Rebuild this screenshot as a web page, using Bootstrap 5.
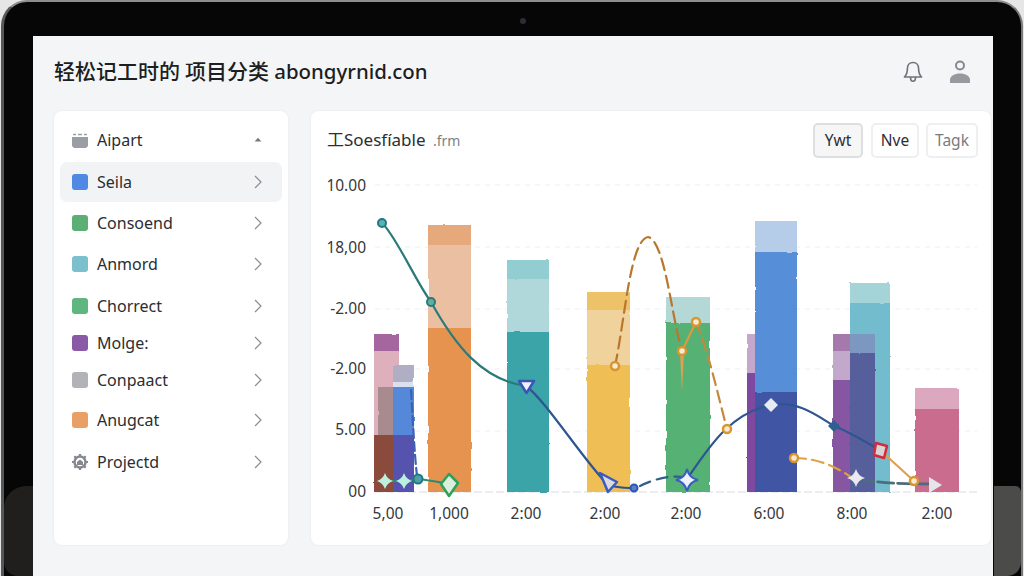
<!DOCTYPE html>
<html lang="zh">
<head>
    <meta charset="utf-8">
    <title>轻松记工时的项目分类</title>
    <link href="https://cdn.jsdelivr.net/npm/bootstrap@5.3.0/dist/css/bootstrap.min.css" rel="stylesheet">
    <style>
        html, body { height: 100%; }
        body {
            background: #e6e6e7;
            overflow: hidden;
            font-family: "Noto Sans", "Noto Sans CJK SC", sans-serif;
        }
        .device {
            position: relative;
            width: 1022px;
            height: 576px;
            margin-left: 1px;
            padding: 36px 28px 0 29px;
            background: #060606;
            border-top: 2px solid #8d8d8d;
            border-left: 3px solid #55585b;
            border-right: 2px solid #77797b;
            border-radius: 26px 26px 0 0;
            box-sizing: border-box;
        }
        .device-camera {
            position: absolute;
            left: 516px;
            top: 16px;
            width: 6px;
            height: 6px;
            border-radius: 50%;
            background: #2b2e36;
        }
        .device-foot {
            position: absolute;
            bottom: 0;
            height: 90px;
        }
        .device-foot-left { left: 0; width: 29px; border-radius: 22px 0 0 14px; background: #211f1d; }
        .device-foot-right { right: 0; width: 27px; border-radius: 0 6px 14px 0; background: #4b4b4a; }
        .screen {
            position: relative;
            z-index: 1;
            width: 960px;
            height: 540px;
            margin-top: -2px;
            background: #f4f5f6;
        }
        .top-bar { height: 75px; padding: 0 22px 4px 21px; }
        .app-title {
            font-size: 20.4px;
            font-weight: 500;
            color: #1c1e21;
            margin: 0;
        }
        .app-title b { font-size: 21px; font-weight: 500; }
        .app-title b + b { margin-left: 5px; }
        .top-icons { gap: 25px; }
        .work-area { padding-left: 21px; gap: 23px; }
        .side-panel, .chart-panel {
            height: 434px;
            background: #fff;
            border-radius: 8px;
            box-shadow: 0 0 3px rgba(0, 0, 0, .06);
        }
        .side-panel { width: 234px; padding: 6px 6px; }
        .chart-panel { width: 680px; }
        .side-row {
            padding: 0 20px 0 12px;
            font-size: 16px;
            color: #2a2d31;
            border-radius: 7px;
        }
        .side-row.active-row { background: #f2f3f4; }
        .side-swatch {
            width: 16px;
            height: 16px;
            border-radius: 3px;
            margin-right: 9px;
            flex: none;
        }
        .side-label { flex: 1; }
        .chart-head { height: 54px; padding: 12px 13px 0 16px; }
        .chart-title { font-size: 17px; line-height: 33px; color: #2b2e32; }
        .chart-title span { font-size: 14px; color: #7d8186; margin-left: 3px; }
        .range-btn {
            height: 35px;
            padding: 0;
            font-size: 15.5px;
            line-height: 31px;
            color: #2c2f33;
            background: #fff;
            border: 2px solid #eeeff0;
            border-radius: 5px;
        }
        .range-btn.on { width: 50px; background: #f6f6f7; border-color: #dcdee0; }
        .range-btn.mid { width: 48px; margin-left: 8px; }
        .range-btn.off { width: 52px; margin-left: 7px; color: #777b80; }
        .chart-box { display: block; }
        .axis-text { font-size: 15.5px; fill: #35383c; font-family: "Noto Sans", sans-serif; }
    </style>
</head>
<body>
    <div class="device">
        <div class="device-camera"></div>
        <div class="device-foot device-foot-left"></div>
        <div class="device-foot device-foot-right"></div>

        <div class="screen">
            <header class="top-bar d-flex align-items-center justify-content-between">
                <h1 class="app-title"><b>轻松记工时的</b><b>项目分类</b> abongyrnid.con</h1>
                <div class="top-icons d-flex align-items-center">
                    <svg width="22" height="24" viewBox="0 0 22 24" fill="none" stroke="#6f7378" stroke-width="1.6" stroke-linecap="round" stroke-linejoin="round">
                        <path d="M11 2.5c-3.7 0-5.6 2.9-5.6 6.2 0 4.700-1.400 6.700-3 8.300h17.200c-1.600-1.600-3-3.600-3-8.300 0-3.300-1.900-6.200-5.600-6.200z"/>
                        <path d="M8.500 17.500c0 2.400 1.100 3.700 2.500 3.700s2.500-1.300 2.500-3.700"/>
                    </svg>
                    <svg width="22" height="24" viewBox="0 0 22 24">
                        <circle cx="11" cy="5.500" r="4" fill="none" stroke="#85898e" stroke-width="2"/>
                        <path d="M1 23v-3c0-4 4.500-6.500 10-6.500s10 2.500 10 6.500v3z" fill="#969a9f"/>
                    </svg>
                </div>
            </header>

            <div class="work-area d-flex">
                <aside class="side-panel" id="sideList"></aside>

                <section class="chart-panel">
                    <div class="chart-head d-flex justify-content-between">
                        <div class="chart-title">工Soesfíable <span>.frm</span></div>
                        <div class="d-flex">
                            <button class="range-btn on" type="button">Ywt</button>
                            <button class="range-btn mid" type="button">Nve</button>
                            <button class="range-btn off" type="button">Tagk</button>
                        </div>
                    </div>
                    <svg class="chart-box" id="chart" width="680" height="380" viewBox="311 165 680 380">
                        <defs>
                            <filter id="rough" x="-5%" y="-5%" width="110%" height="110%">
                                <feTurbulence type="fractalNoise" baseFrequency="0.08" numOctaves="2" seed="4"/>
                                <feDisplacementMap in="SourceGraphic" scale="2.200"/>
                                <feGaussianBlur stdDeviation="0.5"/>
                            </filter>
                        </defs>
                        <g id="gridLines"></g>
                        <g id="bars" filter="url(#rough)"></g>
                        <g fill="none" stroke-width="2.200" stroke-linecap="round">
                            <path stroke="#2a7a78" d="M382 223C396 236 415 280 431 302C455 345 482 380 526 386"/>
                            <path stroke="#2f5590" d="M526 386C545 400 580 455 606 483C612 488 625 488 634 488"/>
                            <path stroke="#2f5f86" stroke-dasharray="11 7" d="M640 486C652 480 668 475 684 477"/>
                            <path stroke="#2f5590" d="M686 480C705 455 725 415 770 405C800 400 820 418 834 426C850 432 865 442 880 450"/>
                            <path stroke="#3a62b8" stroke-dasharray="9 4" d="M411 390C413 420 414 450 417 476"/>
                            <path stroke="#2f8a70" d="M385 481L404 481L418 479C428 480 438 482 449 484"/>
                            <path stroke="#b9772e" stroke-dasharray="12 6" d="M615 366C625 320 630 240 648 237C665 240 672 320 682 351"/>
                            <path stroke="#dc9a3c" d="M682 351L696 322"/>
                            <path stroke="#c48a3c" stroke-dasharray="12 6" d="M696 322C708 350 718 395 727 429"/>
                            <path stroke="#dfa146" stroke-dasharray="12 6" d="M794 458C815 458 835 465 855 480"/>
                            <path stroke="#e0a050" d="M880 450L914 481"/>
                            <path stroke="#4d6d7e" stroke-width="2.800" stroke-dasharray="16 4" d="M858 479C880 483 900 484 935 484"/>
                        </g>
                        <path d="M680 352L684 352L682 392z" fill="#e0a050"/>
                        <g id="markers"></g>
                        <g id="axisLabels"></g>
                    </svg>
                </section>
            </div>
        </div>
    </div>

    <script src="https://cdn.jsdelivr.net/npm/bootstrap@5.3.0/dist/js/bootstrap.bundle.min.js"></script>
    <script>
        // Sidebar rows: h is the row height, the source rows are not evenly spaced
        const sideItems = [
            { label: 'Aipart', h: 45, icon: 'folder', chevron: 'up' },
            { label: 'Seila', h: 40, color: '#5089e3', active: true },
            { label: 'Consoend', h: 42, color: '#5caf74' },
            { label: 'Anmord', h: 40, color: '#7cbfcd' },
            { label: 'Chorrect', h: 44, color: '#5fb67e' },
            { label: 'Molge:', h: 30, color: '#8a5aa6' },
            { label: 'Conpaact', h: 44, color: '#b1b3b8' },
            { label: 'Anugcat', h: 36, color: '#e8a066' },
            { label: 'Projectd', h: 48, icon: 'gear' }
        ];

        const sideIcons = {
            folder: `<svg class="side-swatch" viewBox="0 0 16 16"><path d="M0 5h16v9a2 2 0 0 1-2 2H2a2 2 0 0 1-2-2z" fill="#9a9ea4"/><path d="M1 2.500h3M6 2.500h4M12 2.500h3" stroke="#9a9ea4" stroke-width="1.500"/></svg>`,
            gear: `<svg class="side-swatch" viewBox="0 0 16 16"><circle cx="8" cy="8" r="5.500" fill="none" stroke="#85898e" stroke-width="2.500"/><path d="M8 0v3M8 13v3M0 8h3M13 8h3M2.300 2.300l2 2M11.700 11.700l2 2M13.700 2.300l-2 2M2.300 13.700l2-2" stroke="#85898e" stroke-width="2.200"/><path d="M5 8l3-2.500L11 8v3H5z" fill="#85898e"/></svg>`
        };

        const chevronRight = `<svg width="8" height="14" viewBox="0 0 8 14" fill="none" stroke="#8a8e93" stroke-width="1.200"><path d="M1 1l6 6-6 6"/></svg>`;
        const chevronUp = `<svg width="8" height="6" viewBox="0 0 10 8"><path d="M5 1L9.500 6H.5z" fill="#75797e"/></svg>`;

        document.getElementById('sideList').innerHTML = sideItems.map(item => `
            <div class="side-row d-flex align-items-center ${item.active ? 'active-row' : ''}" style="height:${item.h}px">
                ${item.icon ? sideIcons[item.icon] : `<span class="side-swatch" style="background:${item.color}"></span>`}
                <span class="side-label">${item.label}</span>
                ${item.chevron === 'up' ? chevronUp : chevronRight}
            </div>`).join('');

        // Grid
        let grid = '';
        [185, 247, 309, 369, 431].forEach(y => {
            grid += `<line x1="375" x2="977" y1="${y}" y2="${y}" stroke="#eceef0" stroke-dasharray="5 5"/>`;
        });
        grid += `<line x1="375" x2="977" y1="492" y2="492" stroke="#d9d9e2" stroke-dasharray="8 3"/>`;
        document.getElementById('gridLines').innerHTML = grid;

        // Stacked bars: x, width, then segments as [top, bottom, colour]
        const barData = [
            [374, 25, [[334, 351, '#a5659f'], [351, 435, '#deafbd'], [435, 492, '#8a4b3d']]],
            [378, 17, [[387, 435, '#a88b8f']]],
            [393, 21, [[365, 382, '#b0aec4'], [382, 387, '#dbe0ee'], [387, 435, '#5588d8'], [435, 492, '#5552ad']]],
            [428, 43, [[225, 245, '#e6a97c'], [245, 328, '#eabfa2'], [328, 492, '#e5934f']]],
            [507, 42, [[260, 279, '#92cdd2'], [279, 332, '#b0d8da'], [332, 492, '#3aa4a9']]],
            [587, 43, [[292, 310, '#eec269'], [310, 365, '#efd29c'], [365, 492, '#efbe55']]],
            [666, 44, [[297, 323, '#b3d8d5'], [323, 492, '#57b174']]],
            [747, 25, [[334, 373, '#c4a8cc'], [373, 492, '#7e4a9e']]],
            [755, 42, [[221, 252, '#b5cde8'], [252, 392, '#578ed8'], [392, 492, '#3f57a5']]],
            [850, 40, [[283, 303, '#a4d4d8'], [303, 492, '#72bccd']]],
            [833, 42, [[334, 351, '#a579ac'], [351, 380, '#c2a9cb'], [380, 492, '#8756a3']]],
            [850, 25, [[334, 353, '#7c97c0'], [353, 492, '#565f9c']]],
            [915, 44, [[388, 409, '#dca8bf'], [409, 492, '#c96c8e']]]
        ];
        document.getElementById('bars').innerHTML = barData.map(([x, w, segs]) =>
            segs.map(([a, b, c]) => `<rect x="${x}" y="${a}" width="${w}" height="${b - a}" fill="${c}"/>`).join('')
        ).join('');

        // Markers
        const orangeDot = (x, y) => `<circle cx="${x}" cy="${y}" r="4" fill="#f6ead2" stroke="#d8962f" stroke-width="2.500"/>`;
        const star = (x, y, r, fill, stroke, sw) =>
            `<path d="M${x} ${y - r}Q${x + 2} ${y - 2} ${x + r} ${y}Q${x + 2} ${y + 2} ${x} ${y + r}Q${x - 2} ${y + 2} ${x - r} ${y}Q${x - 2} ${y - 2} ${x} ${y - r}z" fill="${fill}" stroke="${stroke}" stroke-width="${sw}"/>`;
        document.getElementById('markers').innerHTML = [
            `<circle cx="382" cy="223" r="4" fill="#5ab0bb" stroke="#1f7a80" stroke-width="2"/>`,
            `<circle cx="431" cy="302" r="4" fill="#5fb0a0" stroke="#2a7a78" stroke-width="2"/>`,
            `<path d="M519 381h15l-7.500 12z" fill="#f1f1fa" stroke="#3a56b5" stroke-width="2.500" stroke-linejoin="round"/>`,
            `<path d="M600 473L617 482L608 492z" fill="#dcdbe0" stroke="#3a5cc0" stroke-width="2.500" stroke-linejoin="round"/>`,
            `<circle cx="634" cy="488" r="3.500" fill="#5a7fc8" stroke="#2f55b0" stroke-width="2"/>`,
            star(687, 480, 11, '#eef2fc', '#3a5cc0', 2),
            `<path d="M771 398l7 7-7 7-7-7z" fill="#e6ecf2"/>`,
            `<path d="M834 420l6 6-6 6-6-6z" fill="#2f6090"/>`,
            `<path d="M876 443l11 3-3 12-10-3z" fill="#d8d4d8" stroke="#d42a3a" stroke-width="2.500" stroke-linejoin="round"/>`,
            star(856, 478, 9, '#e8eaf0', 'none', 0),
            orangeDot(914, 481),
            `<path d="M929 477L942 485L929 493z" fill="#e6e6ea"/>`,
            orangeDot(615, 366), orangeDot(682, 351), orangeDot(696, 322), orangeDot(727, 429), orangeDot(794, 458),
            star(385, 481, 8, '#bdf0dc', 'none', 0),
            star(404, 481, 8, '#bdf0dc', 'none', 0),
            `<circle cx="418" cy="479" r="4.500" fill="#4f9fa8" stroke="#1f7a80" stroke-width="2"/>`,
            `<path d="M449 474L458 483L449 496L441 484z" fill="#dcefdc" stroke="#2ea05a" stroke-width="2.500" stroke-linejoin="round"/>`
        ].join('');

        // Axis labels
        const yLabels = [['10.00', 191], ['18,00', 253], ['-2.00', 314], ['-2.00', 374], ['5.00', 435], ['00', 497]];
        const xLabels = [['5,00', 388], ['1,000', 449], ['2:00', 526], ['2:00', 605], ['2:00', 686], ['6:00', 769], ['8:00', 852], ['2:00', 937]];
        document.getElementById('axisLabels').innerHTML =
            yLabels.map(([t, y]) => `<text class="axis-text" x="366" y="${y}" text-anchor="end">${t}</text>`).join('') +
            xLabels.map(([t, x]) => `<text class="axis-text" x="${x}" y="519" text-anchor="middle">${t}</text>`).join('');
    </script>
</body>
</html>
